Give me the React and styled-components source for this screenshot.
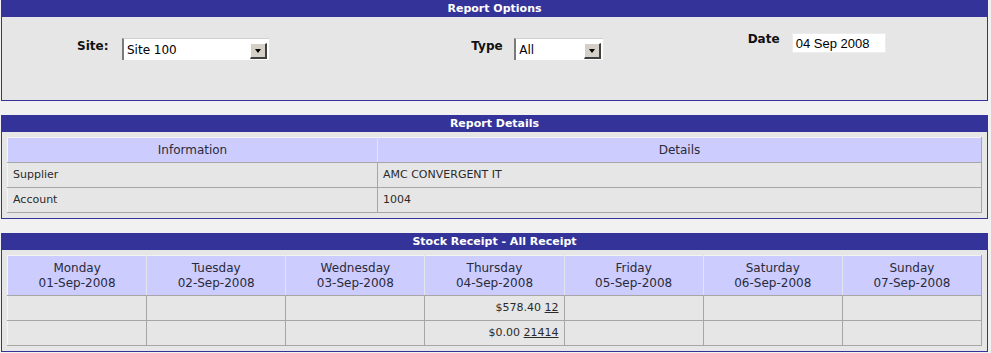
import React from "react";
import styled, { createGlobalStyle } from "styled-components";

const GlobalStyle = createGlobalStyle`
  html, body { margin: 0; padding: 0; }
  body {
    background: #f1f1f1;
    font-family: "DejaVu Sans", Verdana, sans-serif;
  }
`;

const Page = styled.div`
  display: flex;
  flex-direction: column;
  gap: 14px;
  padding: 0 3px 0 1px;
`;

const Panel = styled.section`
  border: 1px solid #333399;
  border-top: none;
  background: #e6e6e6;
`;

const PanelTitle = styled.h2`
  margin: 0;
  height: 17px;
  background: #333399;
  color: #ffffff;
  font: bold 11px/18px "DejaVu Sans", Verdana, sans-serif;
  text-align: center;
`;

const OptionsBody = styled.div`
  height: 83px;
  display: grid;
  grid-template-columns: repeat(3, 1fr);
`;

const Field = styled.div`
  display: flex;
  align-items: flex-start;
  padding: ${(p) => p.$top}px 0 0 ${(p) => p.$left}px;
`;

const Label = styled.label`
  width: ${(p) => p.$w}px;
  flex: none;
  margin-top: ${(p) => p.$dy || 0}px;
  font: bold 12px/15px "DejaVu Sans", Verdana, sans-serif;
  color: #111;
`;

const SelectBox = styled.div`
  width: ${(p) => p.$w}px;
  height: 22px;
  box-sizing: border-box;
  display: flex;
  align-items: center;
  background: #fff;
  border-left: 2px solid #7a7a7a;
  border-top: 1px solid #d0d0d0;
  padding: 0 2px 0 3px;
  margin-top: ${(p) => p.$dy || 0}px;
`;

const SelectText = styled.span`
  flex: 1;
  font: 12px/18px "DejaVu Sans", Verdana, sans-serif;
  color: #000;
  white-space: nowrap;
`;

const ArrowButton = styled.span`
  flex: none;
  width: 17px;
  height: 16px;
  margin-top: 3px;
  box-sizing: border-box;
  display: flex;
  align-items: center;
  justify-content: center;
  background: #d4d0c8;
  border-style: solid;
  border-width: 1px 2px 2px 1px;
  border-color: #ffffff #404040 #404040 #ffffff;
`;

const Triangle = styled.span`
  width: 0;
  height: 0;
  border-left: 3.5px solid transparent;
  border-right: 3.5px solid transparent;
  border-top: 4px solid #000;
`;

const DateInput = styled.div`
  width: 94px;
  height: 20px;
  box-sizing: border-box;
  margin-top: ${(p) => p.$dy || 0}px;
  border: 1px solid #ececec;
  background: #fff;
  padding: 0 3px;
  font: 13px/20px "Liberation Sans", Arial, sans-serif;
  color: #000;
`;

const TableWrap = styled.div`
  padding: 5px;
`;

const Table = styled.table`
  width: 100%;
  border-collapse: collapse;
  table-layout: fixed;
  border-top: 1px solid #f4f4f4;
  border-left: 1px solid #f4f4f4;
`;

const HeadCell = styled.th`
  height: ${(p) => p.$h}px;
  padding: 0 4px;
  background: #ccccff;
  font: normal 12px/15px "DejaVu Sans", Verdana, sans-serif;
  color: #2a2a3a;
  text-align: center;
  vertical-align: middle;
  border-right: 1px solid #e4e4f0;
  border-bottom: 1px solid #a6a6a6;
  &:last-child {
    border-right-color: #a6a6a6;
  }
`;

const Cell = styled.td`
  height: 24px;
  padding: 0 5px;
  font: 11px/14px "DejaVu Sans", Verdana, sans-serif;
  color: #2a2a2a;
  text-align: ${(p) => p.$align || "left"};
  vertical-align: middle;
  border-right: 1px solid #a6a6a6;
  border-bottom: 1px solid #a6a6a6;
  white-space: nowrap;
`;

const CountLink = styled.a`
  color: #2a2a2a;
  text-decoration: underline;
`;

const days = [
  ["Monday", "01-Sep-2008"],
  ["Tuesday", "02-Sep-2008"],
  ["Wednesday", "03-Sep-2008"],
  ["Thursday", "04-Sep-2008"],
  ["Friday", "05-Sep-2008"],
  ["Saturday", "06-Sep-2008"],
  ["Sunday", "07-Sep-2008"],
];

const receipts = [
  { day: 3, amount: "$578.40", count: "12" },
  { day: 3, amount: "$0.00", count: "21414" },
];

function Select({ value, width }) {
  return (
    <SelectBox $w={width}>
      <SelectText>{value}</SelectText>
      <ArrowButton>
        <Triangle />
      </ArrowButton>
    </SelectBox>
  );
}

export default function App() {
  return (
    <>
      <GlobalStyle />
      <Page>
        <Panel>
          <PanelTitle>Report Options</PanelTitle>
          <OptionsBody>
            <Field $top={21} $left={75}>
              <Label $w={45} $dy={1}>Site:</Label>
              <Select value="Site 100" width={147} />
            </Field>
            <Field $top={21} $left={141}>
              <Label $w={43} $dy={1}>Type</Label>
              <Select value="All" width={89} />
            </Field>
            <Field $top={15} $left={89}>
              <Label $w={44}>Date</Label>
              <DateInput $dy={1}>04 Sep 2008</DateInput>
            </Field>
          </OptionsBody>
        </Panel>

        <Panel>
          <PanelTitle>Report Details</PanelTitle>
          <TableWrap>
            <Table>
              <colgroup>
                <col style={{ width: "370px" }} />
                <col />
              </colgroup>
              <thead>
                <tr>
                  <HeadCell $h={24}>Information</HeadCell>
                  <HeadCell $h={24}>Details</HeadCell>
                </tr>
              </thead>
              <tbody>
                <tr>
                  <Cell>Supplier</Cell>
                  <Cell>AMC CONVERGENT IT</Cell>
                </tr>
                <tr>
                  <Cell>Account</Cell>
                  <Cell>1004</Cell>
                </tr>
              </tbody>
            </Table>
          </TableWrap>
        </Panel>

        <Panel>
          <PanelTitle>Stock Receipt - All Receipt</PanelTitle>
          <TableWrap>
            <Table>
              <thead>
                <tr>
                  {days.map(([name, date]) => (
                    <HeadCell key={name} $h={39}>
                      {name}
                      <br />
                      {date}
                    </HeadCell>
                  ))}
                </tr>
              </thead>
              <tbody>
                {receipts.map((r, i) => (
                  <tr key={i}>
                    {days.map((d, j) => (
                      <Cell key={j} $align="right">
                        {j === r.day && (
                          <>
                            {r.amount} <CountLink href="#">{r.count}</CountLink>
                          </>
                        )}
                      </Cell>
                    ))}
                  </tr>
                ))}
              </tbody>
            </Table>
          </TableWrap>
        </Panel>
      </Page>
    </>
  );
}
